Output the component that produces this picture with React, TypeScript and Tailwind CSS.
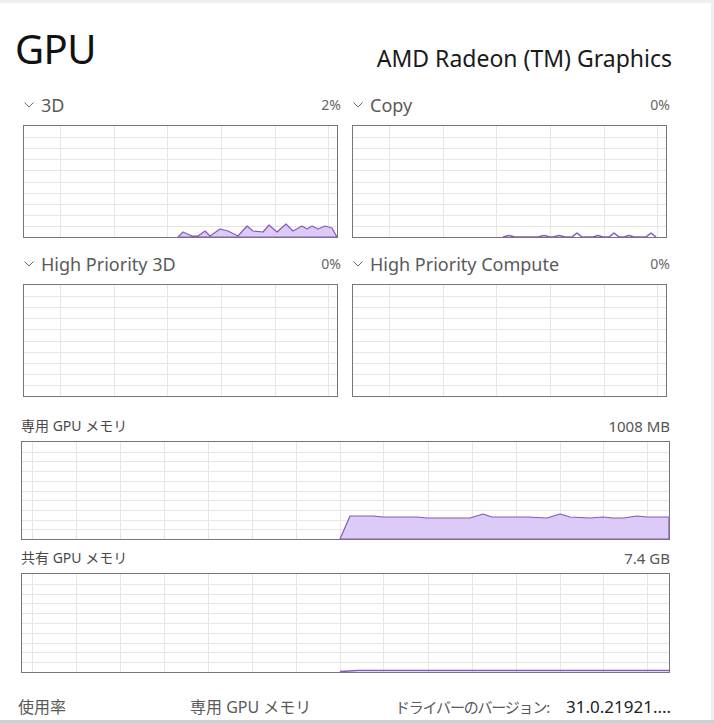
import React from 'react';

const FONT = { fontFamily: '"Noto Sans", "Noto Sans CJK JP", sans-serif' };

type Pt = [number, number];

function Chevron() {
  return (
    <svg width="10" height="6" viewBox="0 0 10 6" className="shrink-0 ml-[1px]">
      <polyline points="0.5,0.5 5,5 9.5,0.5" fill="none" stroke="#6b6b6b" strokeWidth="1" />
    </svg>
  );
}

function Chart({
  w,
  h,
  cols,
  rows,
  fill,
  line,
}: {
  w: number;
  h: number;
  cols: number[];
  rows: number;
  fill?: Pt[];
  line?: Pt[];
}) {
  const iw = w - 2;
  const ih = h - 2;
  const step = ih / rows;
  return (
    <div className="border border-[#767676] bg-white" style={{ width: w, height: h }}>
      <svg width={iw} height={ih} viewBox={`0 0 ${iw} ${ih}`} className="block">
        <g stroke="#e6e6e6" strokeWidth="1" shapeRendering="crispEdges">
          {Array.from({ length: rows - 1 }, (_, i) => (
            <line key={'h' + i} x1="0" x2={iw} y1={Math.round(step * (i + 1)) + 0.5} y2={Math.round(step * (i + 1)) + 0.5} />
          ))}
          {cols.map((x) => (
            <line key={'v' + x} x1={x + 0.5} x2={x + 0.5} y1="0" y2={ih} />
          ))}
        </g>
        {fill && (
          <polygon
            points={fill.map((p) => p.join(',')).join(' ')}
            fill="#dccbf6"
            stroke="#8758c4"
            strokeWidth="1.2"
            strokeLinejoin="round"
          />
        )}
        {line && (
          <polyline
            points={line.map((p) => p.join(',')).join(' ')}
            fill="none"
            stroke="#8758c4"
            strokeWidth="1.6"
            strokeLinejoin="round"
          />
        )}
      </svg>
    </div>
  );
}

const smallCols = [36, 90, 143, 197, 251, 304];
const memCols = [10, 54, 98, 142, 186, 230, 274, 318, 361, 406, 450, 494, 538, 581, 625];

const d3: Pt[] = [
  [154, 111], [159, 106], [168, 110], [174, 110], [181, 105], [186, 110], [196, 103], [204, 105],
  [214, 110], [223, 100], [229, 105], [239, 106], [245, 99], [253, 106], [262, 98], [269, 105],
  [278, 100], [283, 103], [288, 100], [294, 103], [301, 100], [308, 102], [313, 111],
];

const copy: Pt[] = [
  [150, 111], [156, 109.5], [162, 111], [185, 111], [191, 109.5], [197, 111], [200, 111], [206, 109.5],
  [212, 111], [219, 111], [224, 107], [229, 111], [240, 111], [245, 109.5], [250, 111], [256, 111],
  [261, 107], [266, 111], [271, 111], [276, 109.5], [281, 111], [293, 111], [298, 107], [303, 111],
];

const dedicated: Pt[] = [
  [318, 97], [328, 74], [351, 74], [361, 75], [395, 75], [405, 76], [448, 76], [461, 72], [470, 75],
  [505, 75], [525, 76], [538, 72], [548, 75], [568, 76], [581, 75], [591, 76], [601, 76], [615, 74],
  [625, 75], [647, 75], [647, 97],
];

const shared: Pt[] = [
  [318, 97.5], [336, 96.5], [647, 96.5],
];

function SmallPanel({ title, value, fill, line }: { title: string; value: string; fill?: Pt[]; line?: Pt[] }) {
  return (
    <div className="w-[318px] flex flex-col">
      <div className="h-[24px] flex items-center">
        <Chevron />
        <span className="ml-[7px] text-[18px] leading-[24px] text-[#5a5a5a]">{title}</span>
        <span className="ml-auto text-[14px] leading-[24px] text-[#666]">{value}</span>
      </div>
      <div className="mt-[8px]">
        <Chart w={315} h={113} cols={smallCols} rows={10} fill={fill} line={line} />
      </div>
    </div>
  );
}

function MemPanel({ title, value, h, fill, line }: { title: string; value: string; h: number; fill?: Pt[]; line?: Pt[] }) {
  return (
    <div className="w-[649px] flex flex-col">
      <div className="h-[20px] flex items-center justify-between text-[14px] leading-[20px] text-[#4a4a4a]">
        <span>{title}</span>
        <span className="text-[15px] text-[#555]">{value}</span>
      </div>
      <div className="mt-[5px]">
        <Chart w={649} h={h} cols={memCols} rows={10} fill={fill} line={line} />
      </div>
    </div>
  );
}

export default function App() {
  return (
    <div className="w-[714px] h-[723px] bg-white overflow-hidden flex flex-col" style={FONT}>
      <div className="h-[3px] bg-[#efefef] shrink-0" />
      <div className="flex flex-1 min-h-0">
        <div className="flex-1 flex flex-col">
          <header className="h-[90px] pt-[26px] pl-[15px] pr-[39px] flex items-start justify-between">
            <h1 className="text-[40px] leading-[40px] text-[#111] tracking-[-0.5px]">GPU</h1>
            <span className="mt-[14px] text-[23px] leading-[30px] text-[#1a1a1a]">AMD Radeon (TM) Graphics</span>
          </header>

          <div className="pl-[23px] flex gap-[11px]">
            <SmallPanel title="3D" value="2%" fill={d3} />
            <SmallPanel title="Copy" value="0%" line={copy} />
          </div>

          <div className="pl-[23px] mt-[14px] flex gap-[11px]">
            <SmallPanel title="High Priority 3D" value="0%" />
            <SmallPanel title="High Priority Compute" value="0%" />
          </div>

          <div className="pl-[21px] mt-[19px]">
            <MemPanel title="専用 GPU メモリ" value="1008 MB" h={99} fill={dedicated} />
          </div>

          <div className="pl-[21px] mt-[8px]">
            <MemPanel title="共有 GPU メモリ" value="7.4 GB" h={100} line={shared} />
          </div>

          <div className="mt-[22px] h-[24px] pl-[18px] flex items-center text-[16px] leading-[24px] text-[#5a5a5a]">
            <span className="w-[172px]">使用率</span>
            <span className="w-[205px]">専用 GPU メモリ</span>
            <span className="w-[171px] text-[15px] tracking-[-1.2px]">ドライバーのバージョン:</span>
            <span className="text-[17px] text-[#222]">31.0.21921....</span>
          </div>
        </div>
        <div className="w-[3px] bg-[#efefef] shrink-0" />
      </div>
      <div className="h-[3px] bg-[#cfcfcf] shrink-0" />
    </div>
  );
}
